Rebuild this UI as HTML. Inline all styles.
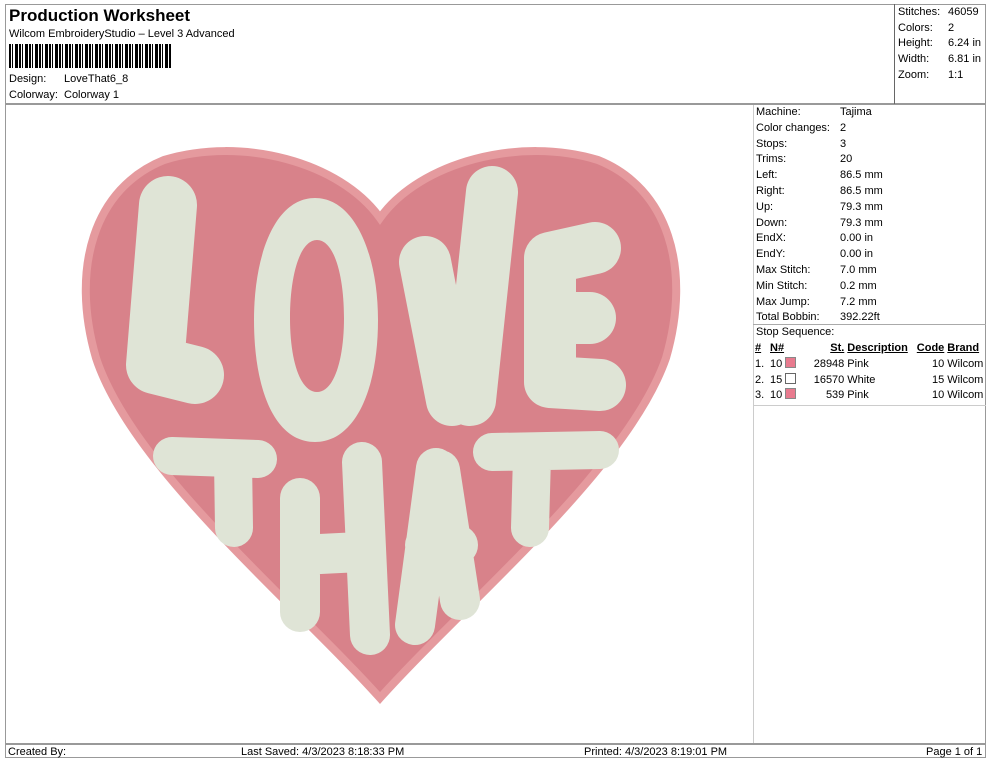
<!DOCTYPE html>
<html><head><meta charset="utf-8"><style>
body{margin:0;width:990px;height:762px;background:#fff;font-family:"Liberation Sans",Arial,sans-serif;font-size:11px;color:#000;position:relative;overflow:hidden}
.a{position:absolute}
.ln{position:absolute;background:#999}
td{padding:0;font-size:11px;white-space:nowrap}
</style></head><body>
<div class="ln" style="left:5px;top:4px;width:981px;height:1px"></div>
<div class="ln" style="left:5px;top:4px;width:1px;height:754px"></div>
<div class="ln" style="left:985px;top:4px;width:1px;height:754px"></div>
<div class="ln" style="left:5px;top:103px;width:981px;height:2px"></div>
<div class="ln" style="left:894px;top:4px;width:1px;height:100px;background:#666"></div>
<div class="ln" style="left:753px;top:105px;width:1px;height:639px;background:#ccc"></div>
<div class="ln" style="left:753px;top:324px;width:233px;height:1px;background:#aaa"></div>
<div class="ln" style="left:753px;top:405px;width:233px;height:1px;background:#ccc"></div>
<div class="ln" style="left:5px;top:743px;width:981px;height:2px"></div>
<div class="ln" style="left:5px;top:757px;width:981px;height:1px"></div>

<div class="a" style="left:9px;top:6px;font-size:17px;font-weight:bold">Production Worksheet</div>
<div class="a" style="left:9px;top:28px">Wilcom EmbroideryStudio – Level 3 Advanced</div>
<div class="a" style="left:9px;top:44px;width:162px;height:24px;background:repeating-linear-gradient(90deg,#000 0 2px,#fff 2px 3px,#000 3px 4px,#fff 4px 6px,#000 6px 9px,#fff 9px 10px)"></div>
<div class="a" style="left:9px;top:73px">Design:</div><div class="a" style="left:64px;top:73px">LoveThat6_8</div>
<div class="a" style="left:9px;top:89px">Colorway:</div><div class="a" style="left:64px;top:89px">Colorway 1</div>

<div class="a" style="left:898px;top:5px;line-height:15.7px">Stitches:<br>Colors:<br>Height:<br>Width:<br>Zoom:</div>
<div class="a" style="left:948px;top:5px;line-height:15.7px">46059<br>2<br>6.24 in<br>6.81 in<br>1:1</div>

<div class="a" style="left:756px;top:105px;line-height:15.8px">Machine:<br>Color changes:<br>Stops:<br>Trims:<br>Left:<br>Right:<br>Up:<br>Down:<br>EndX:<br>EndY:<br>Max Stitch:<br>Min Stitch:<br>Max Jump:<br>Total Bobbin:</div>
<div class="a" style="left:840px;top:105px;line-height:15.8px">Tajima<br>2<br>3<br>20<br>86.5 mm<br>86.5 mm<br>79.3 mm<br>79.3 mm<br>0.00 in<br>0.00 in<br>7.0 mm<br>0.2 mm<br>7.2 mm<br>392.22ft</div>
<div class="a" style="left:756px;top:326px">Stop Sequence:</div>
<table class="a" style="left:755px;top:341px;border-collapse:collapse;line-height:15.8px">
<tr style="font-weight:bold;text-decoration:underline"><td style="width:15px">#</td><td style="width:18px">N#</td><td style="width:48px;text-align:right">St.</td><td style="width:66px;padding-left:3px">Description</td><td style="width:31px;text-align:right">Code</td><td style="padding-left:3px">Brand</td></tr>
<tr><td>1.</td><td>10 <span style="display:inline-block;width:9px;height:9px;background:#e87a8e;border:1px solid #888;vertical-align:-1px"></span></td><td style="text-align:right">28948</td><td style="padding-left:3px">Pink</td><td style="text-align:right">10</td><td style="padding-left:3px">Wilcom</td></tr>
<tr><td>2.</td><td>15 <span style="display:inline-block;width:9px;height:9px;background:#fff;border:1px solid #666;vertical-align:-1px"></span></td><td style="text-align:right">16570</td><td style="padding-left:3px">White</td><td style="text-align:right">15</td><td style="padding-left:3px">Wilcom</td></tr>
<tr><td>3.</td><td>10 <span style="display:inline-block;width:9px;height:9px;background:#e87a8e;border:1px solid #888;vertical-align:-1px"></span></td><td style="text-align:right">539</td><td style="padding-left:3px">Pink</td><td style="text-align:right">10</td><td style="padding-left:3px">Wilcom</td></tr>
</table>

<svg class="a" style="left:0;top:0" width="990" height="762">
<path d="M380,218 C420,162 520,136 598,160 C668,188 692,268 666,358 C628,468 468,600 380,698 C292,600 132,468 96,358 C70,268 94,188 164,160 C242,136 340,162 380,218 Z" fill="#d8828a" stroke="#e59a9e" stroke-width="8" stroke-linejoin="miter"/>
<g fill="#dfe4d6" stroke="none">
<path fill-rule="evenodd" d="M315,198 C355,198 378,255 378,320 C378,390 355,442 315,442 C275,442 254,390 254,320 C254,255 275,198 315,198 Z M317,240 C300,240 290,275 290,318 C290,360 300,392 317,392 C334,392 344,360 344,318 C344,275 334,240 317,240 Z"/>
</g>
<g stroke="#dfe4d6" fill="none" stroke-linecap="round" stroke-linejoin="round">
<path d="M168,205 L155,365 L195,375" stroke-width="58"/>
<path d="M425,262 L452,400 M492,192 L470,400" stroke-width="52"/>
<path d="M595,248 L550,258 L550,382 L600,385 M550,318 L590,318" stroke-width="52"/>
<path d="M172,456 L258,459 M233,460 L234,528" stroke-width="38"/>
<path d="M300,498 L300,612 M300,555 L360,552 M362,462 L370,635" stroke-width="40"/>
<path d="M436,468 L415,625 M440,470 L460,600 M425,545 L458,545" stroke-width="40"/>
<path d="M492,452 L600,450 M532,456 L530,528" stroke-width="38"/>
</g>
</svg>

<div class="a" style="left:8px;top:746px">Created By:</div>
<div class="a" style="left:241px;top:746px">Last Saved: 4/3/2023 8:18:33 PM</div>
<div class="a" style="left:584px;top:746px">Printed: 4/3/2023 8:19:01 PM</div>
<div class="a" style="left:926px;top:746px">Page 1 of 1</div>
</body></html>
